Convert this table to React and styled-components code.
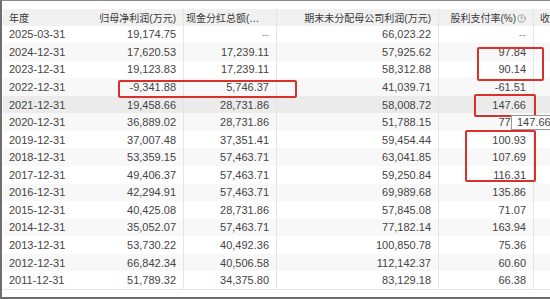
import React from 'react'
import styled, { createGlobalStyle } from 'styled-components'
import { CircleHelp } from 'lucide-react'

const GlobalStyle = createGlobalStyle`
  html, body {
    margin: 0;
    padding: 0;
    background: #fff;
  }
  body {
    font-family: "Liberation Sans", "Noto Sans CJK SC", Arial, sans-serif;
  }
`

const Frame = styled.div`
  position: relative;
  box-sizing: border-box;
  width: 550px;
  height: 299px;
  overflow: hidden;
  background: #fff;
  border-top: 1px solid #8a8a8a;
  border-left: 2px solid #6e6e6e;
  border-bottom: 2px solid #6e6e6e;
  padding: 8px 0 0 1px;
`

const Table = styled.div`
  width: 620px;
  display: flex;
  flex-direction: column;
  border-bottom: 1px solid #e6e6e6;
`

const Row = styled.div`
  display: flex;
  height: ${p => (p.$head ? '16.5px' : '17.57px')};
  background: ${p => (p.$head ? '#f1f1f1' : p.$hover ? '#ebebeb' : p.$stripe ? '#f8f8f8' : '#fff')};
`

const Cell = styled.div`
  box-sizing: border-box;
  width: ${p => p.$w}px;
  flex: none;
  display: flex;
  align-items: center;
  justify-content: ${p => (p.$left ? 'flex-start' : 'flex-end')};
  padding: 0 7px 0 6px;
  font-size: 11px;
  color: ${p => (p.$muted ? '#999' : '#444')};
  white-space: nowrap;
  overflow: hidden;
  border-right: ${p => (p.$line ? '1px solid #e4e4e4' : 'none')};
`

const HeadCell = styled(Cell)`
  padding-left: ${p => (p.$left ? '6px' : '2px')};
`

const HeadText = styled.span`
  display: block;
  min-width: 0;
  font-family: "Liberation Sans", "Noto Sans CJK SC", sans-serif;
  font-size: 10px;
  color: #3a3a3a;
  overflow: hidden;
  text-overflow: ellipsis;
  white-space: nowrap;

  svg {
    vertical-align: -1px;
    margin-left: 1px;
  }
`

const Mark = styled.div`
  position: absolute;
  box-sizing: border-box;
  border: 2px solid #d8312c;
  border-radius: 2px;
`

const Tip = styled.div`
  position: absolute;
  left: 509px;
  top: 114px;
  width: 60px;
  height: 15px;
  box-sizing: border-box;
  background: #fff;
  border: 1px solid #9a9a9a;
  font-size: 11px;
  color: #444;
  padding-left: 5px;
  line-height: 13px;
`

const cols = [
  { w: 90, left: true },
  { w: 91, line: true },
  { w: 93, line: true },
  { w: 162, line: true },
  { w: 95, line: true },
  { w: 80, left: true },
]

const rows = [
  ['2025-03-31', '19,174.75', '--', '66,023.22', '--'],
  ['2024-12-31', '17,620.53', '17,239.11', '57,925.62', '97.84'],
  ['2023-12-31', '19,123.83', '17,239.11', '58,312.88', '90.14'],
  ['2022-12-31', '-9,341.88', '5,746.37', '41,039.71', '-61.51'],
  ['2021-12-31', '19,458.66', '28,731.86', '58,008.72', '147.66'],
  ['2020-12-31', '36,889.02', '28,731.86', '51,788.15', '77.89'],
  ['2019-12-31', '37,007.48', '37,351.41', '59,454.44', '100.93'],
  ['2018-12-31', '53,359.15', '57,463.71', '63,041.85', '107.69'],
  ['2017-12-31', '49,406.37', '57,463.71', '59,250.84', '116.31'],
  ['2016-12-31', '42,294.91', '57,463.71', '69,989.68', '135.86'],
  ['2015-12-31', '40,425.08', '28,731.86', '57,845.08', '71.07'],
  ['2014-12-31', '35,052.07', '57,463.71', '77,182.14', '163.94'],
  ['2013-12-31', '53,730.22', '40,492.36', '100,850.78', '75.36'],
  ['2012-12-31', '66,842.34', '40,506.58', '112,142.37', '60.60'],
  ['2011-12-31', '51,789.32', '34,375.80', '83,129.18', '66.38'],
]

const heads = ['年度', '归母净利润(万元)', '现金分红总额(万元)', '期末未分配母公司利润(万元)', '股利支付率(%)', '收盘价']

const marks = [
  { x: 116, y: 79, w: 179, h: 18 },
  { x: 475, y: 46, w: 67, h: 34 },
  { x: 472, y: 93, w: 62, h: 23 },
  { x: 463, y: 129, w: 71, h: 52 },
]

export default function App() {
  return (
    <>
      <GlobalStyle />
      <Frame>
        <Table>
          <Row $head>
            {heads.map((h, i) => (
              <HeadCell key={h} $w={cols[i].w} $left={cols[i].left} $line={cols[i].line}>
                <HeadText>
                  {h}
                  {i === 4 && <CircleHelp size={9} strokeWidth={1.6} color="#777" />}
                </HeadText>
              </HeadCell>
            ))}
          </Row>
          {rows.map((r, ri) => (
            <Row key={r[0]} $stripe={ri % 2 === 1} $hover={ri === 4}>
              {r.map((v, i) => (
                <Cell key={i} $w={cols[i].w} $left={cols[i].left} $line={cols[i].line} $muted={v === '--'}>
                  {v}
                </Cell>
              ))}
              <Cell $w={cols[5].w} $left />
            </Row>
          ))}
        </Table>
        {marks.map((m, i) => (
          <Mark key={i} style={{ left: m.x, top: m.y, width: m.w, height: m.h }} />
        ))}
        <Tip>147.66</Tip>
      </Frame>
    </>
  )
}
